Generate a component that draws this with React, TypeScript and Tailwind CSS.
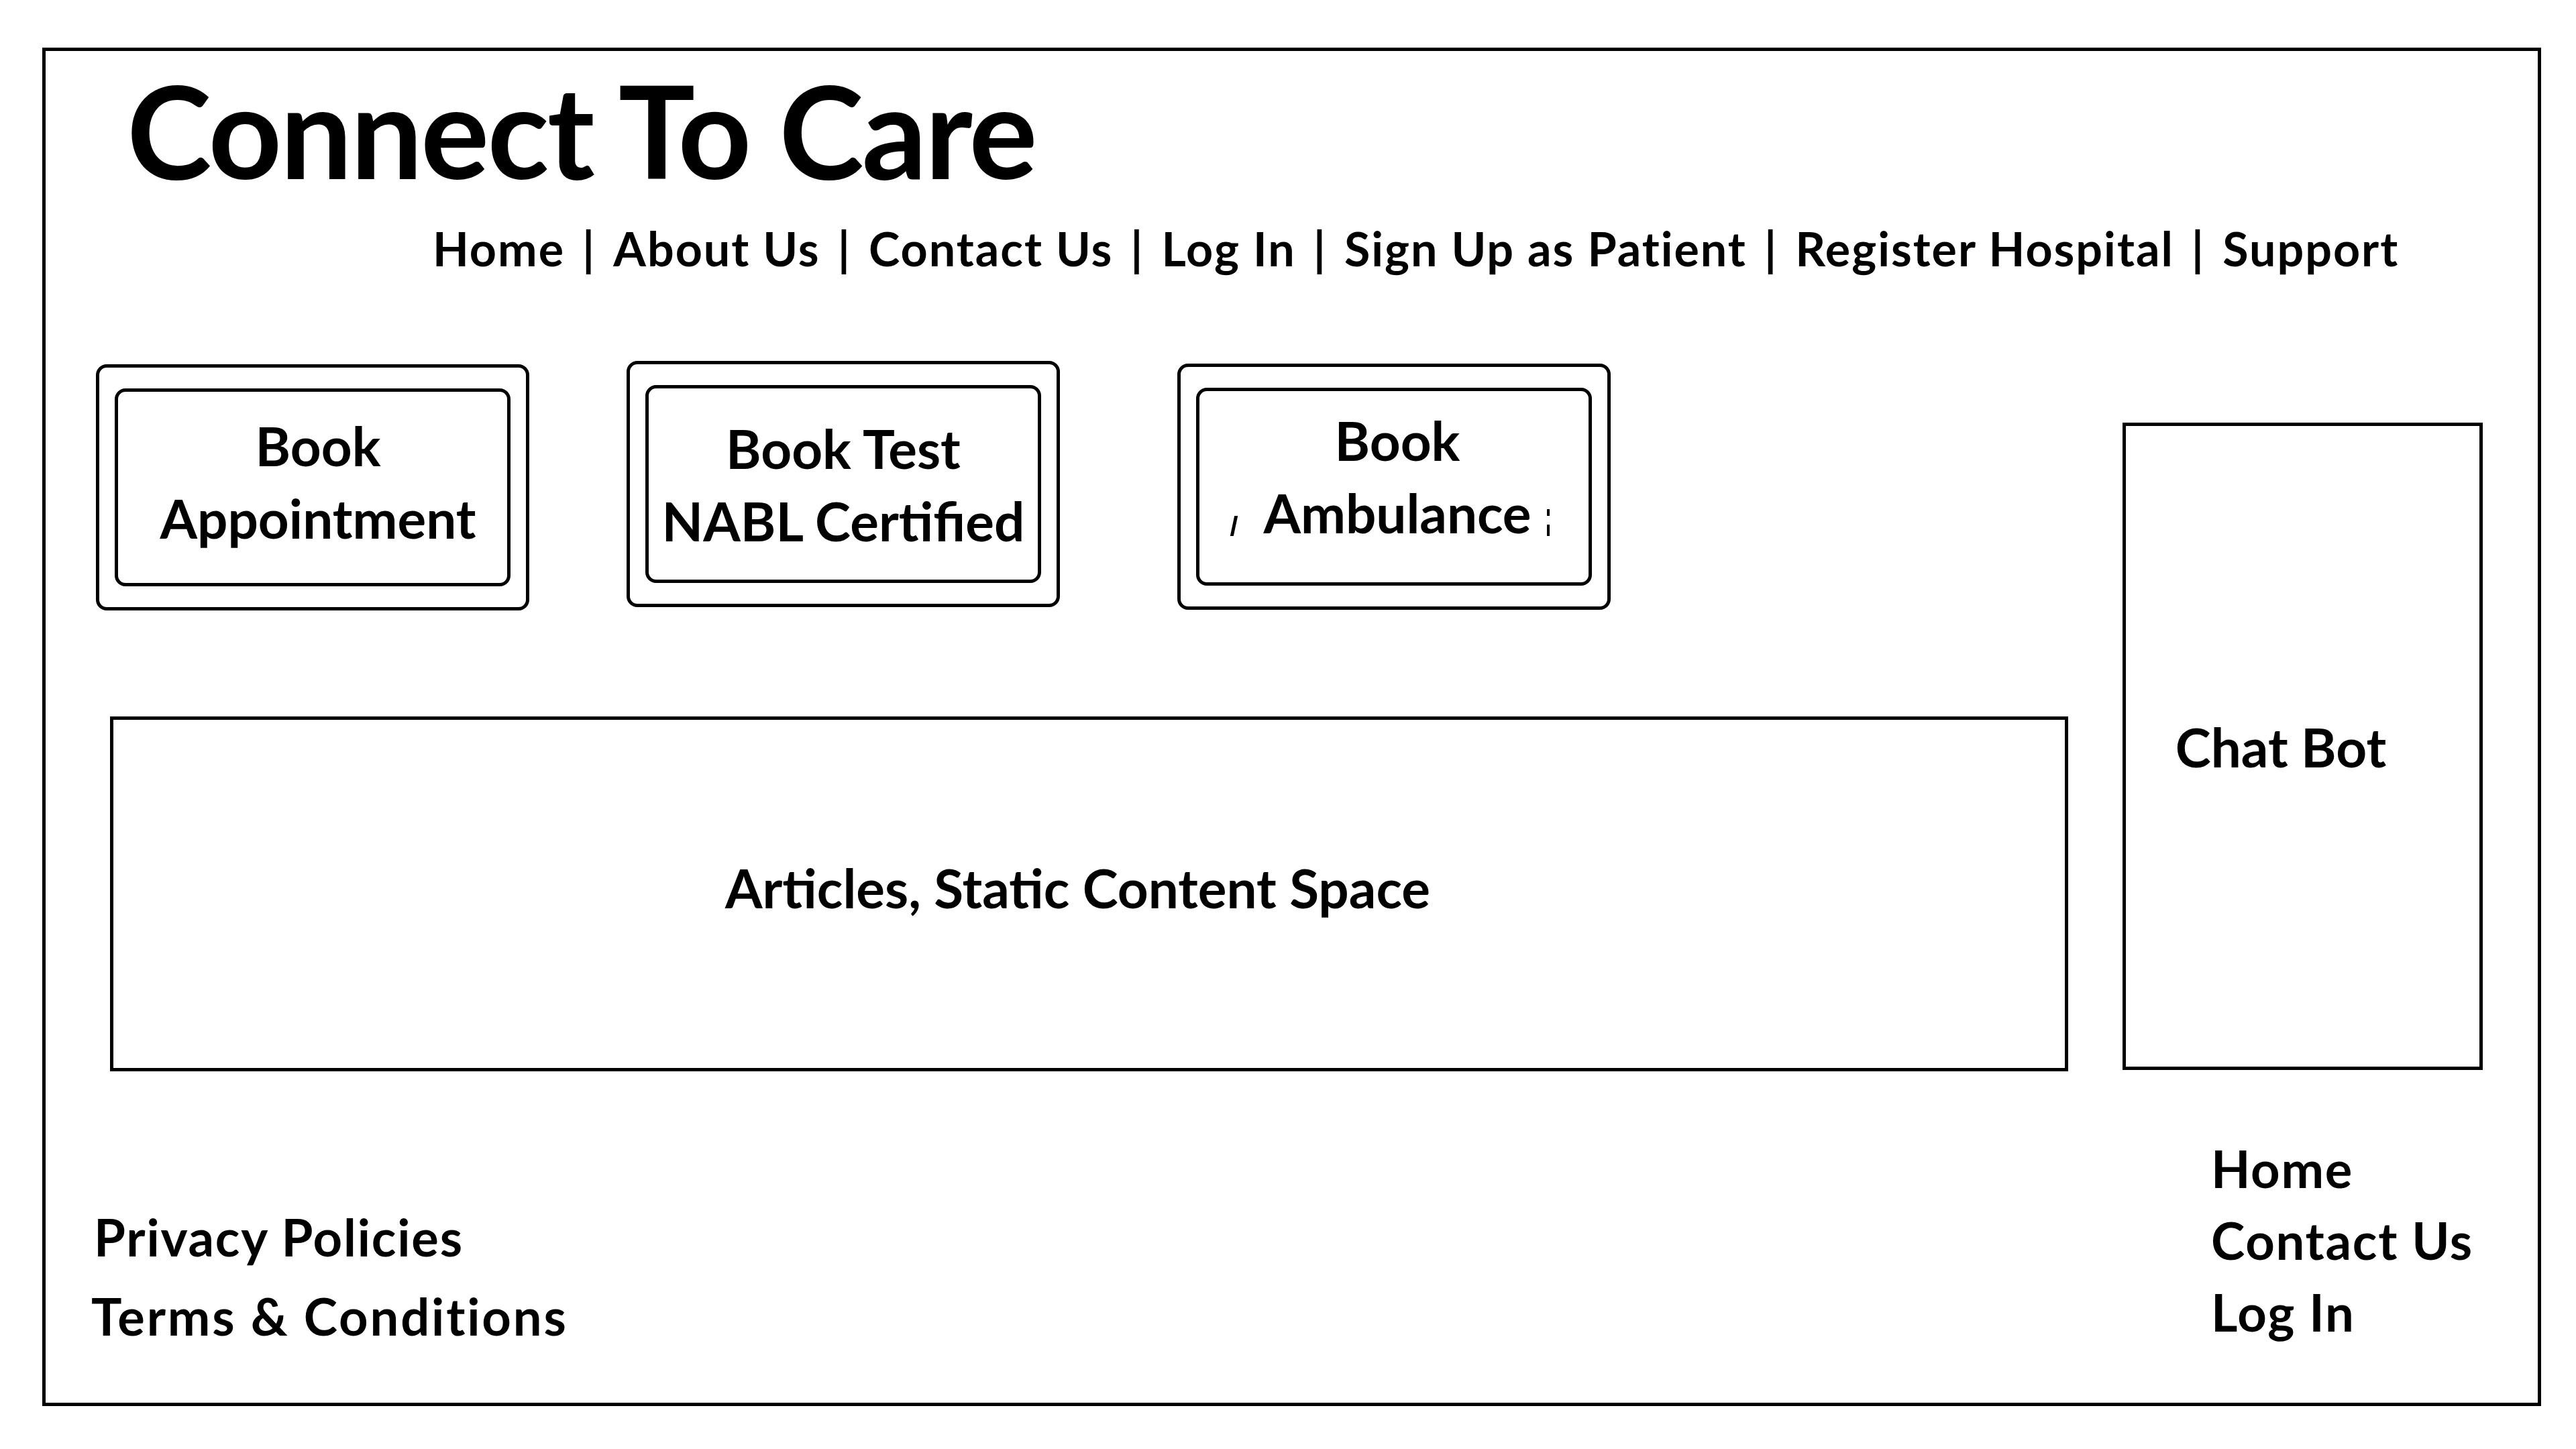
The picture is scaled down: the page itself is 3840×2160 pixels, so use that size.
import React from "react";

const font = "font-['Lato','Open_Sans',sans-serif] font-bold text-black";

const navItems = ["Home", "About Us", "Contact Us", "Log In", "Sign Up as Patient", "Register Hospital", "Support"];

function ActionCard({ lines, className, textClass }: { lines: React.ReactNode[]; className?: string; textClass?: string }) {
  return (
    <div className={`flex h-[367px] w-[646px] shrink-0 items-center justify-center rounded-[16px] border-[5px] border-black ${className ?? ""}`}>
      <div className="flex h-[295px] w-[590px] items-center justify-center rounded-[16px] border-[5px] border-black">
        <div className={`flex flex-col items-center text-[80px] leading-[108px] ${textClass ?? ""}`}>
          {lines.map((line, i) => (
            <div key={i}>{line}</div>
          ))}
        </div>
      </div>
    </div>
  );
}

export default function App() {
  return (
    <div className={`h-[2160px] w-[3840px] overflow-hidden bg-white ${font}`}>
      <div className="ml-[63px] mt-[71px] flex h-[2025px] w-[3725px] flex-col border-[5px] border-black">
        {/* header */}
        <div className="mt-[22px] pl-[121px] text-[191px] leading-none tracking-[-2.8px]">Connect To Care</div>
        <nav className="mt-[46px] flex whitespace-pre pl-[577px] text-[70px] leading-none tracking-[2px]">
          {navItems.map((item, i) => (
            <React.Fragment key={item}>
              {i > 0 && <span className="mx-[26px]">|</span>}
              <span>{item}</span>
            </React.Fragment>
          ))}
        </nav>

        {/* body */}
        <div className="mt-[133px] flex items-start">
          <div className="w-[3015px] shrink-0">
            <div className="ml-[75px] flex items-start">
              <ActionCard className="mt-[5px]" textClass="pb-[18px] pl-[16px]" lines={["Book", "Appointment"]} />
              <ActionCard className="ml-[145px]" lines={["Book Test", "NABL Certified"]} />
              <ActionCard
                className="ml-[175px] mt-[4px]"
                textClass="pb-[32px] pl-[10px]"
                lines={[
                  "Book",
                  <span className="relative inline-block leading-none">
                    Ambulance
                    <span className="absolute -left-[46px] bottom-[5px] h-[30px] w-[5px] -skew-x-12 bg-black" />
                    <span className="absolute -right-[27px] bottom-[5px] h-[17px] w-[4px] bg-black" />
                    <span className="absolute -right-[27px] bottom-[35px] h-[10px] w-[4px] bg-black" />
                  </span>,
                ]}
              />
            </div>
            <div className="ml-[96px] mt-[158px] flex h-[529px] w-[2919px] items-center justify-center border-[5px] border-black pb-[20px] pr-[34px] text-[80px]">
              Articles, Static Content Space
            </div>
          </div>
          <div className="ml-[81px] mt-[92px] flex h-[965px] w-[537px] shrink-0 items-center justify-center border-[5px] border-black pr-[65px] text-[80px]">
            Chat Bot
          </div>
        </div>

        {/* footer */}
        <div className="mt-[91px] flex items-start">
          <div className="mt-[97px] w-[3228px] shrink-0 text-[76px] leading-[118px]">
            <div className="pl-[72px] tracking-[1.8px]">Privacy Policies</div>
            <div className="pl-[68px] tracking-[2.8px]">Terms &amp; Conditions</div>
          </div>
          <div className="text-[76px] leading-[107px] tracking-[1.7px]">
            <div>Home</div>
            <div>Contact Us</div>
            <div>Log In</div>
          </div>
        </div>
      </div>
    </div>
  );
}
